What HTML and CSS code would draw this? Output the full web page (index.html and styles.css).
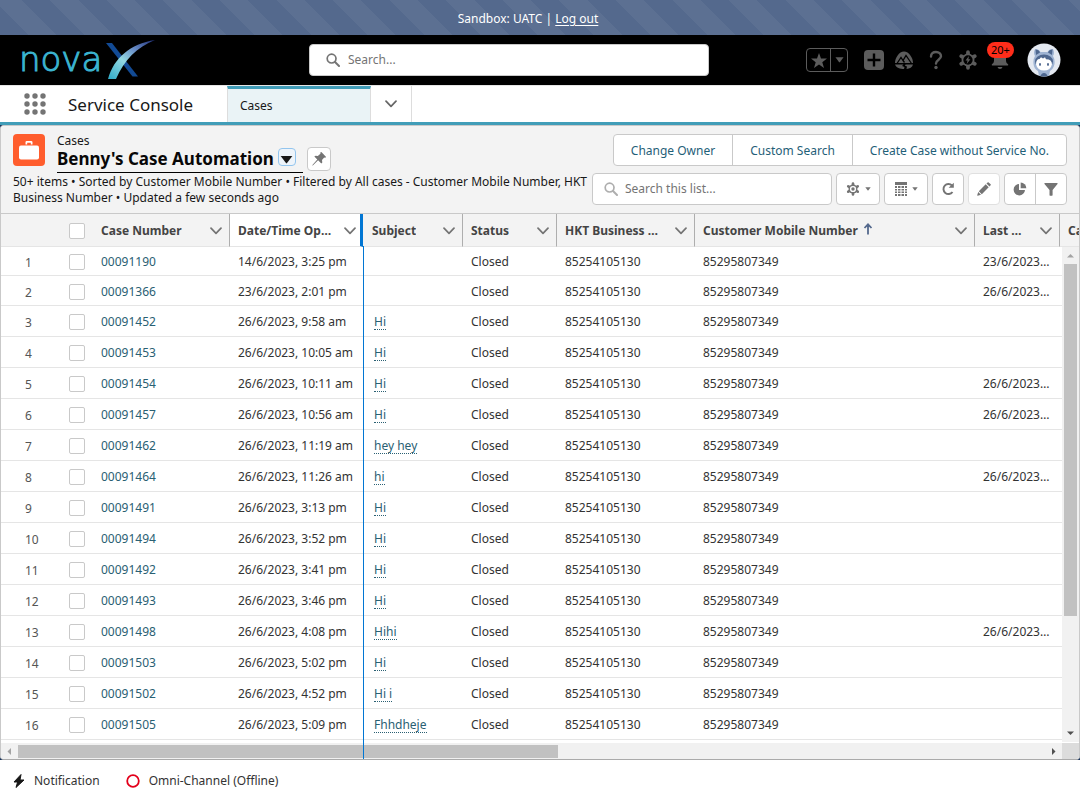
FILE: index.html
```html
<!DOCTYPE html>
<html lang="en">
<head>
<meta charset="utf-8">
<title>Cases | Service Console</title>
<link rel="stylesheet" href="styles.css">
</head>
<body>
<svg class="defs" aria-hidden="true">
  <symbol id="chevron" viewBox="0 0 12 8"><path d="M1 1.2 6 6.4 11 1.2" fill="none" stroke="currentColor" stroke-width="1.7" stroke-linecap="round" stroke-linejoin="round"/></symbol>
  <symbol id="search" viewBox="0 0 14 14"><circle cx="5.6" cy="5.6" r="4.4" fill="none" stroke="currentColor" stroke-width="1.7"/><path d="m9 9 4 4" stroke="currentColor" stroke-width="2" stroke-linecap="round"/></symbol>
  <symbol id="caret" viewBox="0 0 10 6"><path d="M0.5 0h9L5.4 5.4q-.4.4-.8 0z" fill="currentColor"/></symbol>
  <symbol id="gear" viewBox="0 0 18 18"><path d="M9 2v14M2.9 5.5l12.2 7M2.9 12.5l12.2-7" stroke="currentColor" stroke-width="3.4" stroke-linecap="round"/><circle cx="9" cy="9" r="5.8" fill="currentColor"/></symbol>
</svg>

<div class="banner">Sandbox: UATC | <a href="#logout">Log out</a></div>

<header class="global">
  <a class="logo" href="#home" aria-label="novaX">
    <span class="logo-word">nova</span>
    <svg class="logo-mark" viewBox="0 0 50 40" aria-hidden="true">
      <defs><linearGradient id="swoosh" x1="0" y1="1" x2="1" y2="0"><stop offset="0" stop-color="#2eabc8"/><stop offset=".4" stop-color="#93d8e2"/><stop offset=".65" stop-color="#6a8fc8"/><stop offset="1" stop-color="#1f2f78"/></linearGradient></defs>
      <path d="M0 3h6l26 33.500h-5.500z" fill="#124a94"/>
      <path d="M2 39C8 18 24 4 49 0 31 7 18 20 10 39z" fill="url(#swoosh)"/>
    </svg>
  </a>
  <label class="global-search"><svg width="14" height="14"><use href="#search"/></svg><input type="text" placeholder="Search..." aria-label="Search"></label>
  <div class="actions">
    <div class="favorites">
      <button aria-label="Favorite"><svg width="16" height="15" viewBox="0 0 16 15"><path d="m8 0 2 5.400 6 .2-4.700 3.600L13 15l-5-3.400L3 15l1.700-5.800L0 5.600l6-.2z" fill="currentColor"/></svg></button>
      <button aria-label="Favorites list"><svg width="9" height="6"><use href="#caret"/></svg></button>
    </div>
    <button class="icon create" aria-label="Create"><svg width="20" height="20" viewBox="0 0 20 20"><rect width="20" height="20" rx="4" fill="currentColor"/><path d="M10 3.500v13M3.500 10h13" stroke="#000" stroke-width="2.400"/></svg></button>
    <button class="icon" aria-label="Guidance"><svg width="20" height="20" viewBox="0 0 20 20"><path d="M1 13C1 8 5 1.500 10 1.500S19 8 19 13z" fill="currentColor"/><path d="m3 13.500 4-6 2 3 3-5 5.500 8M9 10.500l1.500 2" fill="none" stroke="#000" stroke-width="1.300"/><path d="M1 14.500h8.500l-1.500 1.500 2.500 1-.5 2C6 19 2.500 18 1 14.500zM11.500 14.500H19c-1 3-3 4-6.500 4.400l.5-2.400-2-.8z" fill="currentColor"/></svg></button>
    <button class="icon" aria-label="Help"><svg width="14" height="20" viewBox="0 0 14 20"><path d="M2 6.500C2 3.500 4 2 7 2s5 1.800 5 4.300C12 9.500 7 10 7 13.500" fill="none" stroke="currentColor" stroke-width="2.400" stroke-linecap="round"/><circle cx="7" cy="17.500" r="1.700" fill="currentColor"/></svg></button>
    <button class="icon" aria-label="Setup"><svg width="20" height="20" viewBox="0 0 18 18"><use href="#gear"/><circle cx="9" cy="9" r="4.200" fill="#000"/><path d="m9.800 5.500-3 4h1.800l-.8 3 3.400-4.200H9.400z" fill="currentColor"/></svg></button>
    <button class="icon bell" aria-label="Notifications"><svg width="20" height="20" viewBox="0 0 20 20"><path d="M4 3h12v8q0 2 2 3.200.8.800-.2 1.300H2.200q-1-.5-.2-1.300Q4 13 4 11zM7.500 17h5q-.5 2-2.500 2t-2.500-2z" fill="currentColor"/></svg><span class="badge">20+</span></button>
    <button class="icon avatar" aria-label="View profile"><svg width="34" height="34" viewBox="0 0 34 34"><circle cx="17" cy="17" r="16.500" fill="#e4e9f1"/><path d="M8 6q4 0 5.500 3h7Q22 6 26 6q2 4 0 7 2 3 1.500 8-1 5-4.500 7l-1 4.700q-5 1.600-10 0L11 28q-4-2-4.500-7Q6 16 8 13q-2-3 0-7z" fill="#9fb4d3"/><path d="M8.500 6.500q3.500 0 4.500 3L9 12zM25.500 6.500q-3.500 0-4.500 3l4 2.500z" fill="#4e678f"/><ellipse cx="17" cy="18.500" rx="9" ry="7" fill="#4e678f"/><path d="M9 21.500q0-5.500 3.500-5.500l1.500-1.800 2 1.400 2-1.400 1 2q6 0 6 5.300-1.500 6-8 6t-8-6z" fill="#fff"/><ellipse cx="13" cy="21.500" rx="1" ry="1.400" fill="#4e678f"/><ellipse cx="21" cy="21.500" rx="1" ry="1.400" fill="#4e678f"/><path d="M13.500 33q1-3 3.500-3t3.500 3q-3.500.9-7 0z" fill="#4e678f"/></svg></button>
  </div>
</header>

<nav class="appnav">
  <button class="waffle" aria-label="App Launcher"><svg width="22" height="22" viewBox="0 0 22 22" fill="currentColor"><circle cx="3" cy="3" r="2.700"/><circle cx="11" cy="3" r="2.700"/><circle cx="19" cy="3" r="2.700"/><circle cx="3" cy="11" r="2.700"/><circle cx="11" cy="11" r="2.700"/><circle cx="19" cy="11" r="2.700"/><circle cx="3" cy="19" r="2.700"/><circle cx="11" cy="19" r="2.700"/><circle cx="19" cy="19" r="2.700"/></svg></button>
  <span class="appname">Service Console</span>
  <a class="tab" href="#cases">Cases</a>
  <button class="tabmenu" aria-label="Show navigation menu"><svg width="12" height="8"><use href="#chevron"/></svg></button>
</nav>

<main class="stage">
<section class="panel">
  <div class="listhead">
    <div class="titlebar">
      <span class="case-icon"><svg width="20" height="20" viewBox="0 0 20 20"><path d="M6.500 4.500V2.300q0-1.300 1.300-1.300h4.400q1.300 0 1.300 1.300v2.200h-1.700V2.700H8.200v1.800z" fill="#fff"/><rect y="5.500" width="20" height="14" rx="2" fill="#fff"/></svg></span>
      <div class="names">
        <span class="object">Cases</span>
        <div class="viewname"><h1>Benny's Case Automation</h1><button class="viewmenu" aria-label="Select a list view"><svg width="13" height="8"><use href="#caret"/></svg></button></div>
      </div>
      <button class="pin" aria-label="Pin this list"><svg width="14" height="14" viewBox="0 0 14 14"><path d="M8.500.3q.6-.5 1.100 0l4.100 4.100q.5.5 0 1l-.8.300-.7-.1-2.200 2.500.3 2.300-1 1.100L6.100 8.300.8 13.600l-.6-.4L5.300 7.500 2.300 4.600l1.300-.9 2.200.2L8.400 1.800z" fill="currentColor"/></svg></button>
    </div>
    <div class="bigbuttons"><button>Change Owner</button><button>Custom Search</button><button>Create Case without Service No.</button></div>
    <p class="meta">50+ items • Sorted by Customer Mobile Number • Filtered by All cases - Customer Mobile Number, HKT Business Number • Updated a few seconds ago</p>
    <div class="tools">
      <label class="list-search"><svg width="14" height="14"><use href="#search"/></svg><input type="text" placeholder="Search this list..." aria-label="Search this list"></label>
      <button class="tool wide" aria-label="List view controls"><svg width="14" height="14" viewBox="0 0 18 18"><use href="#gear"/><circle cx="9" cy="9" r="4" fill="#fff"/><circle cx="9" cy="9" r="2.200" fill="currentColor"/></svg><svg width="6" height="4"><use href="#caret"/></svg></button>
      <button class="tool wide" aria-label="Display as"><svg width="12" height="14" viewBox="0 0 12 14" fill="currentColor"><path d="M0 0h12v3H0zM0 4h2v2H0zm3 0h2.500v2H3zm3.500 0H9v2H6.500zM10 4h2v2h-2zM0 7h2v1.500H0zm3 0h2.500v1.500H3zm3.500 0H9v1.500H6.500zM10 7h2v1.500h-2zM0 9.500h2V11H0zm3 0h2.500V11H3zm3.500 0H9V11H6.500zm3.500 0h2V11h-2zM0 12h2v2H0zm3 0h2.500v2H3zm3.500 0H9v2H6.500zm3.500 0h2v2h-2z"/></svg><svg width="6" height="4"><use href="#caret"/></svg></button>
      <button class="tool" aria-label="Refresh"><svg width="14" height="14" viewBox="0 0 14 14"><path d="M11.500 10A5 5 0 1 1 11 3.500" fill="none" stroke="currentColor" stroke-width="1.900"/><path d="M12.800.8v5H7.600z" fill="currentColor"/></svg></button>
      <button class="tool faint" aria-label="Edit list"><svg width="14" height="14" viewBox="0 0 14 14" fill="currentColor"><path d="m1.800 9.200 6.900-6.900 3 3-6.900 6.900zM9.500 1.500 10.600.4q.5-.5 1.100 0l1.900 1.900q.5.500 0 1l-1.100 1.200zM1.200 10 4 12.800.7 13.700q-.6 0-.5-.5z"/></svg></button>
      <div class="pair">
        <button aria-label="Show charts"><svg width="14" height="14" viewBox="0 0 14 14" fill="currentColor"><path d="M6 2v6h6A5.700 5.700 0 1 1 6 2z"/><path d="M7.700.5a5.800 5.800 0 0 1 5.600 5.800H7.700z"/></svg></button>
        <button aria-label="Show filters"><svg width="14" height="13" viewBox="0 0 14 13"><path d="M.8 0h12.400q.8.300.3 1L8.600 7v5q0 .6-.6.800H6q-.5-.2-.5-.8V7L.5 1Q0 .3.800 0z" fill="currentColor"/></svg></button>
      </div>
    </div>
  </div>

  <div class="gridwrap">
    <div class="tableclip">
    <table>
      <colgroup><col class="w-num"><col class="w-check"><col class="w-case"><col class="w-date"><col class="w-subject"><col class="w-status"><col class="w-hkt"><col class="w-mobile"><col class="w-last"><col class="w-more"></colgroup>
      <thead><tr>
        <th class="bare"></th><th class="bare"><input type="checkbox" aria-label="Select all"></th>
        <th><div><span>Case Number</span><svg><use href="#chevron"/></svg></div></th>
        <th class="active"><div><span>Date/Time Opened</span><svg><use href="#chevron"/></svg></div></th>
        <th><div><span>Subject</span><svg><use href="#chevron"/></svg></div></th>
        <th><div><span>Status</span><svg><use href="#chevron"/></svg></div></th>
        <th><div><span>HKT Business Number</span><svg><use href="#chevron"/></svg></div></th>
        <th><div><span>Customer Mobile Number <svg class="sort" viewBox="0 0 10 12"><path d="M5 11.500V1.500M1.500 5 5 1.300 8.500 5" fill="none" stroke="#54698d" stroke-width="1.800"/></svg></span><svg><use href="#chevron"/></svg></div></th>
        <th><div><span>Last Modified</span><svg><use href="#chevron"/></svg></div></th>
        <th><div><span>Case Owner</span></div></th>
      </tr></thead>
      <tbody>
        <tr><td>1</td><td><input type="checkbox" aria-label="Select 00091190"></td><td><a href="#c">00091190</a></td><td>14/6/2023, 3:25 pm</td><td></td><td>Closed</td><td>85254105130</td><td>85295807349</td><td>23/6/2023, 3:30 pm</td><td></td></tr>
        <tr><td>2</td><td><input type="checkbox" aria-label="Select 00091366"></td><td><a href="#c">00091366</a></td><td>23/6/2023, 2:01 pm</td><td></td><td>Closed</td><td>85254105130</td><td>85295807349</td><td>26/6/2023, 3:30 pm</td><td></td></tr>
        <tr><td>3</td><td><input type="checkbox" aria-label="Select 00091452"></td><td><a href="#c">00091452</a></td><td>26/6/2023, 9:58 am</td><td><a href="#s">Hi</a></td><td>Closed</td><td>85254105130</td><td>85295807349</td><td></td><td></td></tr>
        <tr><td>4</td><td><input type="checkbox" aria-label="Select 00091453"></td><td><a href="#c">00091453</a></td><td>26/6/2023, 10:05 am</td><td><a href="#s">Hi</a></td><td>Closed</td><td>85254105130</td><td>85295807349</td><td></td><td></td></tr>
        <tr><td>5</td><td><input type="checkbox" aria-label="Select 00091454"></td><td><a href="#c">00091454</a></td><td>26/6/2023, 10:11 am</td><td><a href="#s">Hi</a></td><td>Closed</td><td>85254105130</td><td>85295807349</td><td>26/6/2023, 3:30 pm</td><td></td></tr>
        <tr><td>6</td><td><input type="checkbox" aria-label="Select 00091457"></td><td><a href="#c">00091457</a></td><td>26/6/2023, 10:56 am</td><td><a href="#s">Hi</a></td><td>Closed</td><td>85254105130</td><td>85295807349</td><td>26/6/2023, 3:30 pm</td><td></td></tr>
        <tr><td>7</td><td><input type="checkbox" aria-label="Select 00091462"></td><td><a href="#c">00091462</a></td><td>26/6/2023, 11:19 am</td><td><a href="#s">hey hey</a></td><td>Closed</td><td>85254105130</td><td>85295807349</td><td></td><td></td></tr>
        <tr><td>8</td><td><input type="checkbox" aria-label="Select 00091464"></td><td><a href="#c">00091464</a></td><td>26/6/2023, 11:26 am</td><td><a href="#s">hi</a></td><td>Closed</td><td>85254105130</td><td>85295807349</td><td>26/6/2023, 3:30 pm</td><td></td></tr>
        <tr><td>9</td><td><input type="checkbox" aria-label="Select 00091491"></td><td><a href="#c">00091491</a></td><td>26/6/2023, 3:13 pm</td><td><a href="#s">Hi</a></td><td>Closed</td><td>85254105130</td><td>85295807349</td><td></td><td></td></tr>
        <tr><td>10</td><td><input type="checkbox" aria-label="Select 00091494"></td><td><a href="#c">00091494</a></td><td>26/6/2023, 3:52 pm</td><td><a href="#s">Hi</a></td><td>Closed</td><td>85254105130</td><td>85295807349</td><td></td><td></td></tr>
        <tr><td>11</td><td><input type="checkbox" aria-label="Select 00091492"></td><td><a href="#c">00091492</a></td><td>26/6/2023, 3:41 pm</td><td><a href="#s">Hi</a></td><td>Closed</td><td>85254105130</td><td>85295807349</td><td></td><td></td></tr>
        <tr><td>12</td><td><input type="checkbox" aria-label="Select 00091493"></td><td><a href="#c">00091493</a></td><td>26/6/2023, 3:46 pm</td><td><a href="#s">Hi</a></td><td>Closed</td><td>85254105130</td><td>85295807349</td><td></td><td></td></tr>
        <tr><td>13</td><td><input type="checkbox" aria-label="Select 00091498"></td><td><a href="#c">00091498</a></td><td>26/6/2023, 4:08 pm</td><td><a href="#s">Hihi</a></td><td>Closed</td><td>85254105130</td><td>85295807349</td><td>26/6/2023, 3:30 pm</td><td></td></tr>
        <tr><td>14</td><td><input type="checkbox" aria-label="Select 00091503"></td><td><a href="#c">00091503</a></td><td>26/6/2023, 5:02 pm</td><td><a href="#s">Hi</a></td><td>Closed</td><td>85254105130</td><td>85295807349</td><td></td><td></td></tr>
        <tr><td>15</td><td><input type="checkbox" aria-label="Select 00091502"></td><td><a href="#c">00091502</a></td><td>26/6/2023, 4:52 pm</td><td><a href="#s">Hi i</a></td><td>Closed</td><td>85254105130</td><td>85295807349</td><td></td><td></td></tr>
        <tr><td>16</td><td><input type="checkbox" aria-label="Select 00091505"></td><td><a href="#c">00091505</a></td><td>26/6/2023, 5:09 pm</td><td><a href="#s">Fhhdheje</a></td><td>Closed</td><td>85254105130</td><td>85295807349</td><td></td><td></td></tr>
      </tbody>
    </table>
    </div>
    <div class="vscroll"><svg viewBox="0 0 17 17"><path d="M5 10.500h7L8.500 7z" fill="#a3a3a3"/></svg><i class="vthumb"></i><i class="vrest"></i><svg viewBox="0 0 17 17"><path d="M5 6.500h7L8.500 10z" fill="#505050"/></svg></div>
    <div class="hscroll"><svg viewBox="0 0 17 17"><path d="M10 5v7L6.500 8.500z" fill="#a3a3a3"/></svg><i class="hthumb"></i><i class="hrest"></i><svg viewBox="0 0 17 17"><path d="M7 5v7l3.500-3.500z" fill="#505050"/></svg><i class="corner"></i></div>
    <div class="resize-line"></div>
  </div>
</section>
</main>

<footer class="utility">
  <button><svg width="12" height="14" viewBox="0 0 12 14"><path d="M8 .5 1 8h3.600L3 13.500 11 6H7z" fill="#181818" stroke="#181818" stroke-linejoin="round"/></svg>Notification</button>
  <button><svg width="14" height="14" viewBox="0 0 14 14"><circle cx="7" cy="7" r="5.800" fill="none" stroke="#e3001b" stroke-width="1.800"/></svg>Omni-Channel (Offline)</button>
</footer>
</body>
</html>
```
FILE: styles.css
```css
* { box-sizing: border-box; }
body {
  margin: 0;
  height: 100vh;
  display: flex;
  flex-direction: column;
  overflow: hidden;
  font: 12px/16px "Noto Sans", "Open Sans", sans-serif;
  color: #181818;
  background: #fff;
}
button, input { font: inherit; color: inherit; }
button { display: flex; align-items: center; justify-content: center; margin: 0; padding: 0; border: 0; background: none; }
svg { display: block; flex: none; }
.defs { position: absolute; width: 0; height: 0; }

.banner {
  flex: none;
  padding: 11px 24px 8px 0;
  text-align: center;
  color: #fff;
  background: repeating-linear-gradient(45deg, #54698d 0 20px, #5c7092 20px 40px);
}
.banner a { color: #fff; text-underline-offset: 2px; }

.global {
  flex: none;
  height: 50px;
  display: grid;
  grid-template-columns: 290fr minmax(200px, 400px) 352fr;
  align-items: center;
  padding: 0 19px;
  background: #000;
}
.logo { display: flex; align-items: flex-start; height: 40px; text-decoration: none; }
.logo-word { font: 200 34px/38px "DejaVu Sans", sans-serif; color: #3bb4d0; -webkit-text-stroke: 1px #3bb4d0; }
.logo-mark { width: 50px; height: 40px; margin-left: 4px; }
.global-search {
  display: flex; align-items: center; gap: 8px;
  height: 32px; padding: 0 16px;
  border: 1px solid #c9c9c9; border-radius: 4px;
  background: #fff; color: #747474;
}
.global-search input, .list-search input { flex: 1; min-width: 0; border: 0; padding: 0; outline: 0; background: none; }
::placeholder { color: #747474; opacity: 1; }
.actions { display: flex; align-items: center; justify-content: flex-end; gap: 12px; color: #5c5c5c; }
.favorites { display: flex; height: 24px; border: 1px solid #5c5c5c; border-radius: 4px; margin-right: 4px; }
.favorites button { width: 23px; }
.favorites button + button { width: 17px; border-left: 1px solid #5c5c5c; }
.icon { width: 20px; height: 34px; }
.create { margin-right: -2px; }
.bell { position: relative; }
.badge {
  position: absolute; top: -1px; left: -3px;
  padding: 0 4px; border-radius: 8px;
  font-size: 11px; line-height: 16px; color: #000; background: #ff2d1a;
}
.avatar { width: 34px; margin-left: 5px; }

.appnav {
  flex: none;
  display: flex;
  height: 40px;
  border-top: 1px solid #e5e5e5;
  border-bottom: 3px solid #419db8;
}
.waffle { width: 22px; margin: 0 22px 0 24px; color: #747474; }
.appname { width: 159px; font-size: 17px; line-height: 37px; }
.tab {
  width: 144px; padding-left: 12px;
  border-top: 3px solid #419db8; border-left: 1px solid #ddd; border-right: 1px solid #ddd;
  background: #eaf3f6; color: inherit; text-decoration: none; line-height: 34px;
}
.tabmenu { width: 41px; border-right: 1px solid #ddd; color: #666; }

.stage { flex: 1; min-height: 0; display: flex; background: #16325c; }
.panel {
  flex: 1; min-width: 0;
  display: flex; flex-direction: column;
  border: 1px solid #c9c9c9; border-bottom-color: #aaa; border-radius: 4px;
  overflow: hidden;
  background: #fff;
}
.listhead {
  display: grid;
  grid-template-columns: 1fr auto;
  gap: 7px 4px;
  padding: 8px 12px 7px 12px;
  background: #f3f3f3;
}
.titlebar { display: flex; gap: 4px; height: 32px; }
.case-icon { flex: none; display: grid; place-items: center; width: 32px; height: 32px; margin-right: 8px; border-radius: 4px; background: #ff5d2d; }
.viewname { display: flex; height: 25px; padding-right: 7px; border-bottom: 1px solid #000; }
.object { display: block; height: 14px; line-height: 14px; }
h1 { margin: 0; font-size: 17px; line-height: 21px; color: #080707; white-space: nowrap; }
.viewmenu { width: 18px; height: 18px; margin-left: 4px; padding-top: 6px; border: 1px solid #93c5ee; border-radius: 4px; background: #eef4fa; }
.pin, .tool, .pair {
  border: 1px solid #c9c9c9; border-radius: 4px; background: #fff; color: #747474;
}
.pin { width: 24px; height: 24px; margin-top: 13px; }
.bigbuttons, .pair { display: flex; height: 32px; justify-self: end; }
.bigbuttons { border: 1px solid #c9c9c9; border-radius: 4px; background: #fff; color: #1f6078; }
.bigbuttons button { padding: 1px 17px 0; white-space: nowrap; }
.bigbuttons button + button, .pair button + button { border-left: 1px solid #c9c9c9; }
.meta { margin: 1px 0 0; }
.tools { display: flex; gap: 4px; justify-content: flex-end; }
.list-search {
  display: flex; align-items: center; gap: 7px;
  width: 240px; height: 32px; padding: 0 11px;
  border: 1px solid #c9c9c9; border-radius: 4px; background: #fff; color: #aeaeae;
}
.tool { width: 32px; height: 32px; }
.wide { width: 44px; gap: 5px; }
.faint { border-color: #e0e0e0; }
.pair button { width: 31px; }
.pair button:first-child { width: 30px; }

.gridwrap { position: relative; flex: 1; min-height: 0; border-top: 1px solid #c9c9c9; }
.tableclip { height: 100%; overflow: hidden; }
table { width: 1159px; border-collapse: separate; border-spacing: 0; table-layout: fixed; }
.w-num { width: 60px; } .w-check { width: 32px; } .w-case { width: 137px; } .w-date { width: 133px; }
.w-subject { width: 100px; } .w-status { width: 94px; } .w-hkt { width: 138px; } .w-mobile { width: 280px; }
.w-last { width: 85px; } .w-more { width: 100px; }
th, td { height: 31px; padding: 2px 8px 0; text-align: left; white-space: nowrap; overflow: hidden; text-overflow: ellipsis; border-bottom: 1px solid #e5e5e5; }
th { height: 33px; border-right: 1px solid #aeaeae; background: #f3f3f3; color: #444; }
th div { display: flex; align-items: center; justify-content: space-between; gap: 13px; }
th span { min-width: 0; overflow: hidden; text-overflow: ellipsis; }
th svg { width: 12px; height: 8px; margin-right: -1px; color: #747474; }
th .sort { display: inline-block; width: 10px; height: 12px; margin: 0 0 0 2px; }
th.bare { border-right: 0; overflow: visible; }
th.active { padding-right: 5px; background: #fff; border-right: 3px solid #0176d3; }
th.active div { gap: 7px; }
th.active + th { padding-left: 9px; }
tbody tr:first-child td { height: 29px; }
tbody tr:nth-child(2) td { height: 30px; }
td { color: #333; }
td:first-child { padding: 4px 0 0 24px; color: #555; }
td:nth-child(4) { padding-right: 0; }
td a { color: #2a6073; text-decoration: none; }
td:nth-child(5) { padding-left: 11px; }
td:nth-child(5) a { display: inline-block; line-height: 15px; border-bottom: 1px dotted #2a6073; }
input[type="checkbox"] { appearance: none; display: block; width: 16px; height: 16px; margin: 0; border: 1px solid #c9c9c9; border-radius: 2px; background: #fff; }

.vscroll { position: absolute; top: 33px; right: 0; bottom: 17px; width: 17px; display: flex; flex-direction: column; background: #f1f1f1; }
.vscroll svg, .hscroll svg { width: 17px; height: 17px; }
.vthumb { flex: 353; margin: 0 2px; background: #c1c1c1; }
.vrest { flex: 109; }
.hscroll { position: absolute; left: 0; right: 0; bottom: 0; height: 16px; display: flex; background: #f1f1f1; }
.hthumb { flex: 540; margin: 2px 0 1px; background: #c1c1c1; }
.hrest { flex: 487; }
.corner { width: 17px; background: #dcdcdc; }
.resize-line { position: absolute; top: 32px; bottom: 0; left: 362px; width: 1px; background: #0176d3; }

.utility { flex: none; display: flex; align-items: center; gap: 26px; height: 40px; padding: 2px 13px 0; }
.utility button { gap: 9px; color: #333; }
```
